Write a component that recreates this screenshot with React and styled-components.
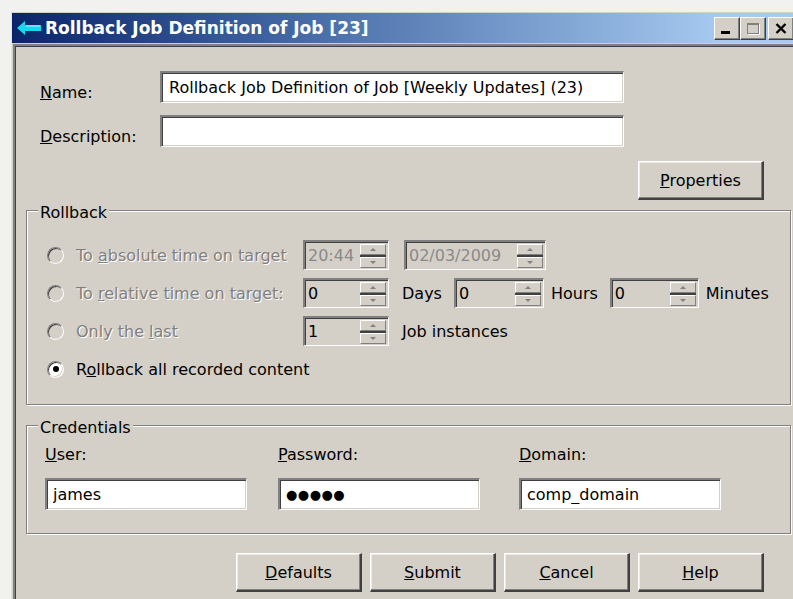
import React from "react";
import styled, { createGlobalStyle } from "styled-components";

const GlobalStyle = createGlobalStyle`
  html, body {
    margin: 0;
    padding: 0;
    background: #f1f1f0;
    overflow: hidden;
  }
  body {
    font-family: "DejaVu Sans", sans-serif;
    font-size: 16px;
  }
`;

const Key = ({ children }) => <u>{children}</u>;

const BackArrow = () => (
  <svg width="24" height="14" viewBox="0 0 24 14">
    <path d="M0 7 L8 0 L8 4 L24 4 L24 10 L8 10 L8 14 Z" fill="#17d8ee" />
    <path d="M9 5 L23 5" stroke="#a8f6ff" strokeWidth="1" />
  </svg>
);

const CloseGlyph = () => (
  <svg width="12" height="11" viewBox="0 0 12 11">
    <path d="M1.5 1 L10.5 10 M10.5 1 L1.5 10" stroke="#000" strokeWidth="2.4" />
  </svg>
);

const App = () => {
  return (
    <Page>
      <GlobalStyle />
      <Window>
        <TitleBar>
          <BackArrow />
          <Title>Rollback Job Definition of Job [23]</Title>
          <Caption>
            <CapButton>
              <MinGlyph />
            </CapButton>
            <CapButton>
              <MaxGlyph />
            </CapButton>
            <CapButton $gap>
              <CloseGlyph />
            </CapButton>
          </Caption>
        </TitleBar>

        <Content>
          <Fields>
            <Label $drop>
              <Key>N</Key>ame:
            </Label>
            <TextBox
              $w={464}
              $pad={7}
              defaultValue="Rollback Job Definition of Job [Weekly Updates] (23)"
            />
            <Label $drop>
              <Key>D</Key>escription:
            </Label>
            <TextBox $w={464} defaultValue="" />
          </Fields>

          <ButtonRow $top={14}>
            <Button>
              <Key>P</Key>roperties
            </Button>
          </ButtonRow>

          <Group $top={-2} $bottom={20}>
            <Legend>Rollback</Legend>
            <Choices>
              <Choice $disabled>
                <Radio $disabled />
                <span>
                  To <Key>a</Key>bsolute time on target
                </span>
              </Choice>
              <Spin $w={86} $disabled>
                <SpinValue>20:44</SpinValue>
                <SpinArrows />
              </Spin>
              <After>
                <Spin $w={142} $disabled $shift={9}>
                  <SpinValue>02/03/2009</SpinValue>
                  <SpinArrows />
                </Spin>
              </After>

              <Choice $disabled>
                <Radio $disabled />
                <span>
                  To <Key>r</Key>elative time on target:
                </span>
              </Choice>
              <Spin $w={86}>
                <SpinValue>0</SpinValue>
                <SpinArrows />
              </Spin>
              <After>
                <Unit>Days</Unit>
                <Spin $w={90}>
                  <SpinValue>0</SpinValue>
                  <SpinArrows />
                </Spin>
                <Unit>Hours</Unit>
                <Spin $w={89}>
                  <SpinValue>0</SpinValue>
                  <SpinArrows />
                </Spin>
                <Unit>Minutes</Unit>
              </After>

              <Choice $disabled>
                <Radio $disabled />
                <span>
                  Only the <Key>l</Key>ast
                </span>
              </Choice>
              <Spin $w={86}>
                <SpinValue>1</SpinValue>
                <SpinArrows />
              </Spin>
              <After>
                <Unit>Job instances</Unit>
              </After>

              <Choice $wide>
                <Radio>
                  <Dot />
                </Radio>
                <span>
                  R<Key>o</Key>llback all recorded content
                </span>
              </Choice>
            </Choices>
          </Group>

          <Group $top={8} $bottom={23}>
            <Legend>Credentials</Legend>
            <Credentials>
              <Field>
                <Label>
                  <Key>U</Key>ser:
                </Label>
                <TextBox $w={202} defaultValue="james" />
              </Field>
              <Field>
                <Label>
                  <Key>P</Key>assword:
                </Label>
                <Masked>●●●●●</Masked>
              </Field>
              <Field>
                <Label>
                  <Key>D</Key>omain:
                </Label>
                <TextBox $w={202} defaultValue="comp_domain" />
              </Field>
            </Credentials>
          </Group>

          <ButtonRow $top={19}>
            <Button>
              <Key>D</Key>efaults
            </Button>
            <Button>
              <Key>S</Key>ubmit
            </Button>
            <Button>
              <Key>C</Key>ancel
            </Button>
            <Button>
              <Key>H</Key>elp
            </Button>
          </ButtonRow>
        </Content>
      </Window>
    </Page>
  );
};

const SpinArrows = () => (
  <SpinColumn>
    <SpinBtn>
      <ArrowUp />
    </SpinBtn>
    <SpinBtn>
      <ArrowDown />
    </SpinBtn>
  </SpinColumn>
);

export default App;
//
const Page = styled.div`
  width: 793px;
  height: 599px;
  box-sizing: border-box;
  padding: 12px 0 0 11px;
  overflow: hidden;
`;

const Window = styled.div`
  width: 790px;
  height: 600px;
  display: flex;
  flex-direction: column;
  background: #d4d0c8;
  border-top: 1px solid #d4d0c8;
  border-left: 1px solid #e4e2dc;
`;

const TitleBar = styled.div`
  height: 30px;
  flex-shrink: 0;
  display: flex;
  align-items: center;
  gap: 4px;
  padding-left: 5px;
  background: linear-gradient(90deg, #0a246a 0%, #3a5e9c 30%, #a6caf0 90%);
  color: #fff;
`;

const Title = styled.div`
  font-weight: bold;
  font-size: 17px;
`;

const Caption = styled.div`
  margin-left: auto;
  display: flex;
  padding-right: 8px;
`;

const CapButton = styled.span`
  width: 26px;
  height: 23px;
  box-sizing: border-box;
  margin-left: ${(p) => (p.$gap ? "2px" : "0")};
  display: flex;
  align-items: center;
  justify-content: center;
  background: #d4d0c8;
  border: 1px solid;
  border-color: #fff #404040 #404040 #fff;
  box-shadow: inset -1px -1px 0 #808080;
`;

const MinGlyph = styled.span`
  width: 9px;
  height: 3px;
  margin-top: 9px;
  margin-right: 3px;
  background: #000;
`;

const MaxGlyph = styled.span`
  width: 12px;
  height: 11px;
  box-sizing: border-box;
  border: 1px solid #808080;
  border-top-width: 2px;
  box-shadow: 1px 1px 0 #fff;
`;

const Content = styled.div`
  flex: 1;
  margin: 1px 0 0 1px;
  border-top: 2px solid #808080;
  border-left: 2px solid #808080;
  box-shadow: inset 1px 1px 0 #404040;
  padding-top: 25px;
`;

const Fields = styled.div`
  margin-left: 25px;
  display: grid;
  grid-template-columns: 120px 464px;
  row-gap: 12px;
  align-items: center;
`;

const Label = styled.span`
  color: #000;
  line-height: 18px;
  white-space: nowrap;
  padding-top: ${(p) => (p.$drop ? "11px" : "0")};
`;

const TextBox = styled.input`
  width: ${(p) => p.$w}px;
  height: 32px;
  box-sizing: border-box;
  margin: 0;
  padding: 0 0 0 ${(p) => p.$pad || 6}px;
  border-style: solid;
  border-width: 2px 1px 1px 2px;
  border-color: #808080 #fff #fff #808080;
  box-shadow: inset 1px 1px 0 #404040, inset -1px -1px 0 #d4d0c8;
  background: #fff;
  color: #000;
  font: inherit;
  outline: none;
`;

const Masked = styled.div`
  width: 202px;
  height: 32px;
  box-sizing: border-box;
  display: flex;
  align-items: center;
  padding-left: 6px;
  border-style: solid;
  border-width: 2px 1px 1px 2px;
  border-color: #808080 #fff #fff #808080;
  box-shadow: inset 1px 1px 0 #404040, inset -1px -1px 0 #d4d0c8;
  background: #fff;
  font-size: 13px;
  letter-spacing: 0.5px;
`;

const ButtonRow = styled.div`
  width: 749px;
  margin-top: ${(p) => p.$top}px;
  display: flex;
  justify-content: flex-end;
  gap: 8px;
`;

const Button = styled.button`
  width: 126px;
  height: 39px;
  box-sizing: border-box;
  margin: 0;
  padding: 0;
  font: inherit;
  color: #000;
  background: #d4d0c8;
  border-style: solid;
  border-width: 1px 2px 2px 1px;
  border-color: #fff #404040 #404040 #fff;
  box-shadow: inset -1px -1px 0 #808080, inset 1px 1px 0 #ecebe6;
`;

const Group = styled.fieldset`
  width: 765px;
  box-sizing: border-box;
  margin: ${(p) => p.$top}px 0 0 11px;
  padding: 0 0 ${(p) => p.$bottom}px 11px;
  min-inline-size: 0;
  border: 1px solid #808080;
  box-shadow: inset 1px 1px 0 #fff, 1px 1px 0 #fff;
`;

/* text sits a little below the frame line, as in the classic group box */
const Legend = styled.legend`
  padding: 6px 2px 0;
  line-height: 18px;
  background: #d4d0c8;
  color: #000;
`;

const Choices = styled.div`
  margin: 18px 0 0 9px;
  display: grid;
  grid-template-columns: 256px 86px auto;
  grid-auto-rows: 30px;
  row-gap: 8px;
  align-items: center;
`;

const Choice = styled.div`
  display: flex;
  align-items: center;
  gap: 12px;
  white-space: nowrap;
  grid-column: ${(p) => (p.$wide ? "1 / -1" : "auto")};
  color: ${(p) => (p.$disabled ? "#808080" : "#000")};
  text-shadow: ${(p) => (p.$disabled ? "1px 1px 0 #fff" : "none")};
`;

const Radio = styled.span`
  width: 17px;
  height: 17px;
  box-sizing: border-box;
  flex-shrink: 0;
  display: inline-flex;
  align-items: center;
  justify-content: center;
  border-radius: 50%;
  border: 1px solid;
  border-color: #808080 #fff #fff #808080;
  box-shadow: inset 1px 1px 0 #404040, inset -1px -1px 0 #d4d0c8;
  background: ${(p) => (p.$disabled ? "#d4d0c8" : "#fff")};
`;

const Dot = styled.span`
  width: 6px;
  height: 6px;
  border-radius: 50%;
  background: #000;
`;

const After = styled.div`
  margin-left: 6px;
  display: flex;
  align-items: center;
`;

const Unit = styled.span`
  padding: 0 12px 0 7px;
  color: #000;
  white-space: nowrap;
`;

const Spin = styled.div`
  width: ${(p) => p.$w}px;
  height: 30px;
  box-sizing: border-box;
  margin-left: ${(p) => p.$shift || 0}px;
  display: flex;
  align-items: center;
  padding: 0 2px 0 3px;
  border-style: solid;
  border-width: 2px 1px 1px 2px;
  border-color: #808080 #fff #fff #808080;
  box-shadow: inset 1px 1px 0 #404040, inset -1px -1px 0 #d4d0c8;
  background: #d4d0c8;
  color: ${(p) => (p.$disabled ? "#8a8a8a" : "#000")};
`;

const SpinValue = styled.span`
  flex: 1;
  white-space: nowrap;
`;

const SpinColumn = styled.div`
  width: 26px;
  display: flex;
  flex-direction: column;
  gap: 2px;
  background: #404040;
`;

const SpinBtn = styled.div`
  height: 11px;
  box-sizing: border-box;
  display: flex;
  align-items: center;
  justify-content: center;
  background: #d4d0c8;
  border-style: solid;
  border-width: 1px;
  border-color: #fff #808080 #808080 #fff;
`;

const ArrowUp = styled.span`
  width: 0;
  height: 0;
  border-left: 3px solid transparent;
  border-right: 3px solid transparent;
  border-bottom: 3px solid #808080;
`;

const ArrowDown = styled.span`
  width: 0;
  height: 0;
  border-left: 3px solid transparent;
  border-right: 3px solid transparent;
  border-top: 3px solid #808080;
`;

const Credentials = styled.div`
  margin: 9px 0 0 7px;
  display: grid;
  grid-template-columns: 233px 241px 202px;
`;

const Field = styled.div`
  display: flex;
  flex-direction: column;
  gap: 14px;
`;
